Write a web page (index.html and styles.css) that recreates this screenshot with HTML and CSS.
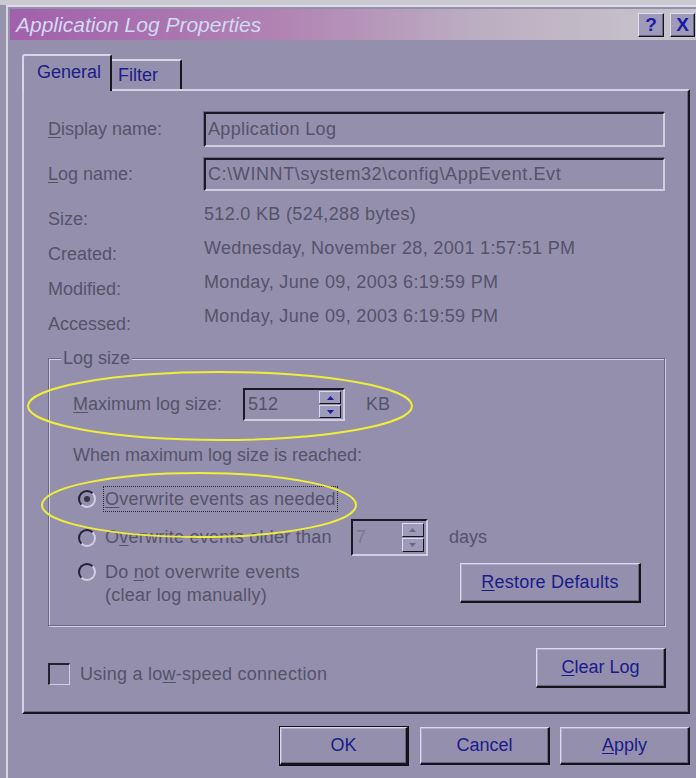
FILE: index.html
```html
<!DOCTYPE html>
<html lang="en">
<head>
<meta charset="utf-8">
<title>Application Log Properties</title>
<link rel="stylesheet" href="styles.css">
</head>
<body>
<div class="window">
  <div class="titlebar">
    <span class="title">Application Log Properties</span>
    <div class="caption-btns">
      <span class="cbtn">?</span>
      <span class="cbtn close">X</span>
    </div>
  </div>

  <div class="client">
    <div class="tabs">
      <div class="tab sel">General</div>
      <div class="tab">Filter</div>
    </div>

    <div class="panel">
      <div class="field-row r-display">
        <span class="lbl"><u>D</u>isplay name:</span>
        <div class="edit">Application Log</div>
      </div>
      <div class="field-row r-log">
        <span class="lbl"><u>L</u>og name:</span>
        <div class="edit path">C:\WINNT\system32\config\AppEvent.Evt</div>
      </div>

      <div class="info">
        <div class="info-labels">
          <div>Size:</div>
          <div>Created:</div>
          <div>Modified:</div>
          <div>Accessed:</div>
        </div>
        <div class="info-values">
          <div>512.0 KB (524,288 bytes)</div>
          <div>Wednesday, November 28, 2001 1:57:51 PM</div>
          <div>Monday, June 09, 2003 6:19:59 PM</div>
          <div>Monday, June 09, 2003 6:19:59 PM</div>
        </div>
      </div>

      <fieldset class="group">
        <legend>Log size</legend>
        <div class="group-body">
          <div class="max-row">
            <span class="max-lbl"><u>M</u>aximum log size:</span>
            <div class="spin spin-max">
              <span class="spin-val">512</span>
              <span class="spin-btns">
                <span class="sb"><svg viewBox="0 0 7 4" width="7" height="4"><polygon points="0,4 7,4 3.5,0"/></svg></span>
                <span class="sb"><svg viewBox="0 0 7 4" width="7" height="4"><polygon points="0,0 7,0 3.5,4"/></svg></span>
              </span>
            </div>
            <span class="unit">KB</span>
          </div>

          <div class="when">When maximum log size is reached:</div>

          <div class="radio-row rr1">
            <span class="radio on"></span>
            <span class="rlabel focus"><u>O</u>verwrite events as needed</span>
          </div>

          <div class="radio-row rr2">
            <span class="radio"></span>
            <span class="rlabel">O<u>v</u>erwrite events older than</span>
            <div class="spin spin-days">
              <span class="spin-val">7</span>
              <span class="spin-btns">
                <span class="sb"><svg viewBox="0 0 7 4" width="7" height="4"><polygon points="0,4 7,4 3.5,0"/></svg></span>
                <span class="sb"><svg viewBox="0 0 7 4" width="7" height="4"><polygon points="0,0 7,0 3.5,4"/></svg></span>
              </span>
            </div>
            <span class="unit days">days</span>
          </div>

          <div class="radio-row rr3">
            <span class="radio"></span>
            <span class="rlabel">Do <u>n</u>ot overwrite events<br>(clear log manually)</span>
            <span class="btn restore"><u>R</u>estore Defaults</span>
          </div>
        </div>
      </fieldset>

      <div class="bottom-row">
        <div class="check-wrap">
          <span class="check"></span>
          <span class="check-lbl">Using a lo<u>w</u>-speed connection</span>
        </div>
        <span class="btn clear"><u>C</u>lear Log</span>
      </div>
    </div>

    <div class="buttons">
      <span class="btn default ok">OK</span>
      <span class="btn cancel">Cancel</span>
      <span class="btn apply"><u>A</u>pply</span>
    </div>
  </div>
</div>

<svg class="marks" width="696" height="778" viewBox="0 0 696 778">
  <ellipse cx="220" cy="406" rx="192" ry="34"/>
  <ellipse cx="199" cy="505" rx="157" ry="32"/>
</svg>
</body>
</html>
```

FILE: styles.css
```css
* { box-sizing: border-box; }

html, body {
  margin: 0;
  height: 100%;
}

body {
  position: relative;
  overflow: hidden;
  background: linear-gradient(#cbcad2 0 5px, #9893ac 5px);
  font-family: "Liberation Sans", Arial, sans-serif;
  font-size: 18px;
  color: #55536a;
}

u { text-decoration: underline; text-underline-offset: 2px; }

/* ---- window frame ---- */
.window {
  width: 690px;
  height: calc(100% - 5px);
  margin: 5px 0 0 6px;
  border-top: 2px solid #dddce6;
  border-left: 2px solid #d6d4e0;
  padding: 2px 0 0 2px;
  background: #948fad;
}

.titlebar {
  height: 31px;
  display: flex;
  align-items: center;
  padding: 0 1px 0 6px;
  background: linear-gradient(to right, #a160ab 0%, #b184b3 40%, #bcaec2 68%, #c8c6cc 100%);
}

.title {
  font-style: italic;
  font-size: 21px;
  color: #d3d9f3;
}

.caption-btns {
  margin-left: auto;
  display: flex;
  gap: 6px;
}

.cbtn {
  width: 26px;
  height: 24px;
  display: flex;
  align-items: center;
  justify-content: center;
  background: #9e9aba;
  border: 1px solid;
  border-color: #e2e0f0 #141420 #141420 #e2e0f0;
  box-shadow: inset -1px -1px 0 #6a6684;
  font-weight: bold;
  font-size: 19px;
  color: #1a1aa2;
}
.cbtn.close { width: 25px; }

/* ---- client area ---- */
.client {
  padding: 14px 0 0 12px;
}

.tabs {
  height: 35px;
  display: flex;
  align-items: flex-end;
  position: relative;
  z-index: 1;
}

.tab {
  height: 30px;
  width: 70px;
  padding-left: 6px;
  display: flex;
  align-items: center;
  color: #1c1c86;
  border-top: 2px solid #d8d6e8;
  border-right: 2px solid #16161e;
  border-top-right-radius: 2px;
}

.tab.sel {
  width: 90px;
  height: 37px;
  margin-bottom: -2px;
  padding: 0 0 2px 13px;
  background: #948fad;
  border-left: 2px solid #d8d6e8;
  border-top-left-radius: 3px;
  border-top-right-radius: 3px;
}

.panel {
  width: 668px;
  border: 2px solid;
  border-color: #d6d2e6 #16161e #16161e #d6d2e6;
  box-shadow: inset -1px -1px 0 #6c6884;
  padding: 21px 23px 24px 24px;
}

.field-row {
  display: flex;
  align-items: center;
}
.r-display { height: 35px; }
.r-log { height: 33px; margin-top: 11px; }

.lbl {
  width: 156px;
  flex: none;
}

.edit {
  flex: 1;
  height: 100%;
  border: 2px solid;
  border-color: #1a1a26 #d2cee2 #d2cee2 #1a1a26;
  box-shadow: -1px -1px 0 #6e6a86;
  padding: 0 2px;
  display: flex;
  align-items: center;
  white-space: nowrap;
  letter-spacing: 0.35px;
}
.edit.path { letter-spacing: 0.6px; }

.info {
  height: 136px;
  margin-top: 6px;
  display: grid;
  grid-template-columns: 156px 1fr;
}
.info-labels { padding-top: 5px; line-height: 35px; }
.info-values { line-height: 34px; letter-spacing: 0.33px; }

/* ---- Log size group ---- */
.group {
  margin: 14px 0 0;
  padding: 0;
  min-width: 0;
  border: 1px solid #6c6884;
  box-shadow: inset 1px 1px 0 #d4d0e4, 1px 1px 0 #d4d0e4;
}

.group legend {
  margin-left: 12px;
  padding: 0 2px;
  line-height: 22px;
  background: #948fad;
}

.group-body {
  padding: 0 23px 18px 24px;
}

.max-row {
  margin-top: 19px;
  height: 33px;
  display: flex;
  align-items: center;
}
.max-lbl { width: 170px; flex: none; }

.spin {
  height: 100%;
  display: flex;
  border: 2px solid;
  border-color: #1a1a26 #d2cee2 #d2cee2 #1a1a26;
  padding: 1px 2px 1px 2px;
}
.spin-max { width: 102px; }
.spin-val { flex: 1; display: flex; align-items: center; padding-left: 1px; }
.spin-btns {
  width: 22px;
  display: flex;
  flex-direction: column;
  gap: 1px;
}
.sb {
  flex: 1;
  display: flex;
  align-items: center;
  justify-content: center;
  background: #9e9aba;
  border: 1px solid;
  border-color: #dcdaec #14141c #14141c #dcdaec;
}
.sb svg { fill: #1c1ca0; }

.unit { margin-left: 21px; }

.when {
  margin-top: 23px;
  line-height: 22px;
}

.radio-row {
  display: flex;
  align-items: center;
}
.radio {
  width: 18px;
  height: 18px;
  flex: none;
  margin-left: 5px;
  position: relative;
  border-radius: 50%;
  border: 2px solid;
  border-color: #222232 #d2cee2 #d2cee2 #222232;
}
.radio.on::after {
  content: "";
  position: absolute;
  left: 4px;
  top: 4px;
  width: 6px;
  height: 6px;
  border-radius: 50%;
  background: #353545;
}

.rlabel { margin-left: 9px; line-height: 23px; letter-spacing: 0.25px; }
.rlabel.focus {
  margin-left: 7px;
  padding: 0 1px;
  line-height: 24px;
  border: 1px dotted #2a2a3a;
}

.rr1 { margin-top: 20px; height: 26px; }
.rr2 { margin-top: 7px; height: 37px; }

.spin-days {
  width: 77px;
  margin-left: 19px;
  padding-top: 2px;
  padding-bottom: 2px;
}
.spin-days .spin-val { color: #7c7892; }
.spin-days .sb svg { fill: #6c6884; }

.rr3 {
  margin-top: 5px;
  align-items: flex-start;
}
.rr3 .radio { margin-top: 2px; }

/* ---- push buttons ---- */
.btn {
  display: flex;
  align-items: center;
  justify-content: center;
  color: #1b1b8c;
  background: #948fad;
  border: 1px solid;
  border-width: 1px 2px 2px 1px;
  border-color: #dcd8ec #14141c #14141c #dcd8ec;
  box-shadow: inset -1px -1px 0 #6a6682, inset 1px 1px 0 #b0acc8;
}

.restore {
  margin-left: auto;
  margin-top: 2px;
  width: 181px;
  height: 40px;
  letter-spacing: 0.2px;
}

.bottom-row {
  margin-top: 22px;
  display: flex;
  align-items: flex-start;
}
.check-wrap {
  margin-top: 15px;
  display: flex;
  align-items: center;
}
.check {
  width: 22px;
  height: 22px;
  border: 2px solid;
  border-width: 2px 1px 1px 2px;
  border-color: #222230 #d2cee2 #d2cee2 #222230;
}
.check-lbl { margin-left: 10px; line-height: 22px; letter-spacing: 0.25px; }

.clear {
  margin-left: auto;
  margin-right: -1px;
  width: 130px;
  height: 40px;
}

.buttons {
  width: 668px;
  margin-top: 13px;
  display: flex;
  justify-content: flex-end;
}
.buttons .btn { height: 38px; width: 130px; }
.buttons .ok {
  width: 128px;
  margin-right: 12px;
  outline: 1px solid #101018;
  outline-offset: 0;
}
.buttons .cancel { margin-right: 10px; }

/* ---- highlighter marks drawn over the dialog ---- */
.marks {
  position: absolute;
  left: 0;
  top: 0;
  pointer-events: none;
}
.marks ellipse {
  fill: none;
  stroke: #eeee3a;
  stroke-width: 2;
}
```
